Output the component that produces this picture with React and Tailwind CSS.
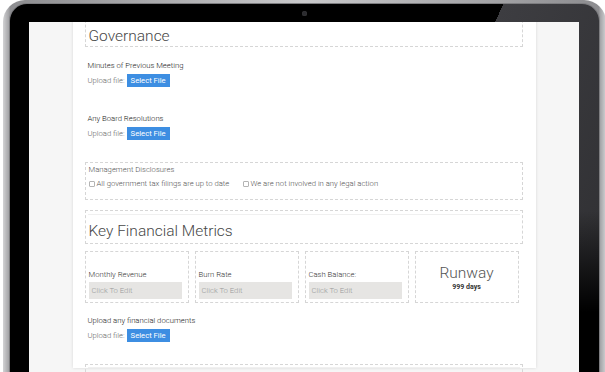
import React from 'react';

const box = 'border border-dashed border-[#d6d6d6]';

function UploadRow() {
  return (
    <div className="mt-[2px] flex items-center gap-[2px] px-[3px] text-[7.7px] leading-[13px]">
      <span className="font-light text-[#666]">Upload file:</span>
      <span className="h-[13px] bg-[#3d8ee2] px-[4px] text-white">Select File</span>
    </div>
  );
}

function Label({ children, className = '' }) {
  return <p className={`px-[3px] text-[7.7px] font-light leading-[12px] text-[#222] ${className}`}>{children}</p>;
}

function Check({ children, className = '' }) {
  return (
    <div className={`flex items-center gap-[2px] ${className}`}>
      <span className="h-[6px] w-[6px] rounded-[1px] border border-[#b4b4b4] bg-white" />
      <span>{children}</span>
    </div>
  );
}

function Metric({ label }) {
  return (
    <div className={`${box} h-[52px] w-[104px] pl-[3px] pr-[6px] pt-[17px]`}>
      <p className="text-[7.7px] font-light leading-[12px] text-[#333]">{label}</p>
      <div className="mt-[1px] h-[17px] bg-[#e6e5e3] px-[3px] text-[7.7px] font-light leading-[17px] text-[#999]">Click To Edit</div>
    </div>
  );
}

export default function App() {
  return (
    <div className="h-[372px] w-[605px] overflow-hidden bg-white font-[family-name:Roboto,'Liberation_Sans',sans-serif]">
      {/* laptop rim */}
      <div className="ml-[3px] h-[380px] w-[603px] rounded-t-[22px] bg-[linear-gradient(to_right,#d2d2d4,#a2a2a5_1%,#8d8d90_1.2%,#c9c9cb_50%,#8d8d90_98.8%,#a2a2a5_99%,#d2d2d4)] px-[7px] pt-[4px]">
        {/* bezel */}
        <div className="h-[376px] rounded-t-[17px] bg-[linear-gradient(to_bottom,transparent_55%,#000_82%),linear-gradient(114deg,#000_65.2%,#3d3d41_65.2%,#2e2e31_100%)] pl-[19px] pr-[20px] shadow-[0_0_0_1px_#7d7d80]">
          <div className="flex h-[18px] justify-center pt-[7px]">
            <span className="h-[5px] w-[5px] rounded-full bg-[#2c2c30] shadow-[inset_0_0_1px_#555]" />
          </div>
          {/* screen */}
          <div className="h-[358px] overflow-hidden bg-[#f6f6f6]">
            <div className="mx-auto h-full w-[463px] bg-white pl-3 pr-[13px] shadow-[0_0_3px_rgba(0,0,0,0.13)]">
              <div className={`${box} -mt-[12px] px-[3px] pt-[15px]`}>
                <h2 className="text-[15.5px] font-light leading-[20px] text-[#474747]">Governance</h2>
              </div>

              <Label className="mt-[13px]">Minutes of Previous Meeting</Label>
              <UploadRow />

              <Label className="mt-[26px]">Any Board Resolutions</Label>
              <UploadRow />

              <div className={`${box} mt-[22px] px-[3px] pb-[9px] pt-[1px] text-[7.7px] font-light leading-[12px] text-[#555]`}>
                <p>Management Disclosures</p>
                <div className="mt-[2px] flex">
                  <Check className="w-[154px]">All government tax filings are up to date</Check>
                  <Check>We are not involved in any legal action</Check>
                </div>
              </div>

              <div className={`${box} mt-[10px] pb-[2px]`}>
                <div className="mx-[2px] mt-[3px] border-t border-[#f0f0f0] pl-[1px] pt-[6px]">
                  <h2 className="text-[15.5px] font-light leading-[20px] text-[#474747]">Key Financial Metrics</h2>
                </div>
              </div>

              <div className="mt-[7px] flex gap-[6px]">
                <Metric label="Monthly Revenue" />
                <Metric label="Burn Rate" />
                <Metric label="Cash Balance:" />
                <div className={`${box} flex h-[52px] w-[104px] flex-col items-center pt-[11px]`}>
                  <p className="text-[15.5px] font-light leading-[20px] text-[#555]">Runway</p>
                  <p className="text-[7px] font-bold leading-[8px] text-[#333]">999 days</p>
                </div>
              </div>

              <Label className="mt-[12px]">Upload any financial documents</Label>
              <UploadRow />

              <div className={`${box} mt-[22px] h-[60px]`}>
                <div className="mx-[2px] mt-[2px] border-t border-[#f0f0f0]" />
              </div>
            </div>
          </div>
        </div>
      </div>
    </div>
  );
}
